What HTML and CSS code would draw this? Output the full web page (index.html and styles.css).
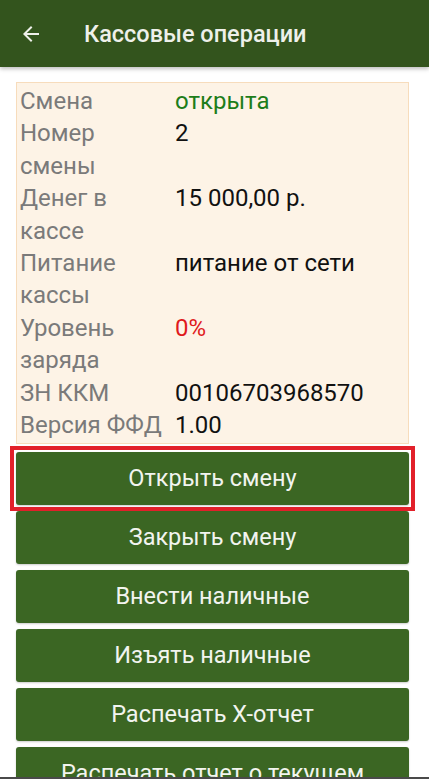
FILE: index.html
```html
<!DOCTYPE html>
<html lang="ru">
<head>
<meta charset="utf-8">
<title>Кассовые операции</title>
<link rel="stylesheet" href="styles.css">
</head>
<body>
<div class="screen">
  <header class="appbar">
    <svg class="back" width="24" height="24" viewBox="0 0 24 24" aria-hidden="true">
      <path d="M20 11H7.83l5.59-5.59L12 4l-8 8 8 8 1.41-1.41L7.83 13H20v-2z" fill="#eef0ea"/>
    </svg>
    <h1 class="title">Кассовые операции</h1>
  </header>
  <main class="content">
    <div class="info">
      <div class="label">Смена</div><div class="value ok">открыта</div>
      <div class="label">Номер смены</div><div class="value">2</div>
      <div class="label">Денег в кассе</div><div class="value">15 000,00 р.</div>
      <div class="label">Питание кассы</div><div class="value">питание от сети</div>
      <div class="label">Уровень заряда</div><div class="value bad">0%</div>
      <div class="label">ЗН ККМ</div><div class="value">00106703968570</div>
      <div class="label">Версия ФФД</div><div class="value">1.00</div>
    </div>
    <div class="actions">
      <button class="btn highlighted">Открыть смену</button>
      <button class="btn">Закрыть смену</button>
      <button class="btn">Внести наличные</button>
      <button class="btn">Изъять наличные</button>
      <button class="btn">Распечать X-отчет</button>
      <button class="btn">Распечать отчет о текущем состоянии расчетов</button>
    </div>
  </main>
  <div class="navline"></div>
</div>
</body>
</html>
```
FILE: styles.css
```css
html, body {
  margin: 0;
  padding: 0;
  background: #ffffff;
}
body {
  font-family: Roboto, "Noto Sans", "Liberation Sans", sans-serif;
  width: 429px;
  height: 779px;
  overflow: hidden;
}
.screen {
  position: relative;
  width: 429px;
  height: 779px;
  overflow: hidden;
}
.appbar {
  height: 67px;
  background: #33541d;
  display: flex;
  align-items: center;
  padding-left: 19px;
  box-shadow: 0 2px 4px rgba(0,0,0,0.25);
  position: relative;
  z-index: 2;
}
.back {
  width: 24px;
  height: 24px;
  flex: none;
}
.title {
  margin: 0 0 0 41px;
  font-size: 23.5px;
  font-weight: 500;
  color: #eef0ea;
}
.content {
  padding: 15px 20px 0 16px;
}
.info {
  background: #fdf3e6;
  border: 1px solid #f7dcbc;
  padding: 2px 4px 2px 3px;
  display: grid;
  grid-template-columns: 150px 1fr;
  column-gap: 5px;
  font-size: 24px;
  line-height: 32.4px;
}
.label {
  color: #7a7a7a;
}
.value {
  color: #111111;
}
.value.ok {
  color: #1d7d1a;
}
.value.bad {
  color: #e0191c;
}
.actions {
  display: flex;
  flex-direction: column;
  gap: 6px;
  margin-top: 8px;
}
.btn {
  display: block;
  width: 100%;
  min-height: 53px;
  border: none;
  border-radius: 3px;
  background: #3b6623;
  color: #f2f4ef;
  font-family: inherit;
  font-size: 23.5px;
  line-height: 27px;
  padding: 13px 10px;
  text-align: center;
  box-shadow: 0 1px 2px rgba(0,0,0,0.2);
}
.btn.highlighted {
  position: relative;
}
.btn.highlighted::after {
  content: "";
  position: absolute;
  left: -6px;
  right: -6px;
  top: -6px;
  bottom: -6px;
  border: 4px solid #e2202a;
  pointer-events: none;
}
.navline {
  position: absolute;
  left: 0;
  right: 0;
  bottom: 0;
  height: 2px;
  background: #4a4a4a;
  z-index: 3;
}
```
